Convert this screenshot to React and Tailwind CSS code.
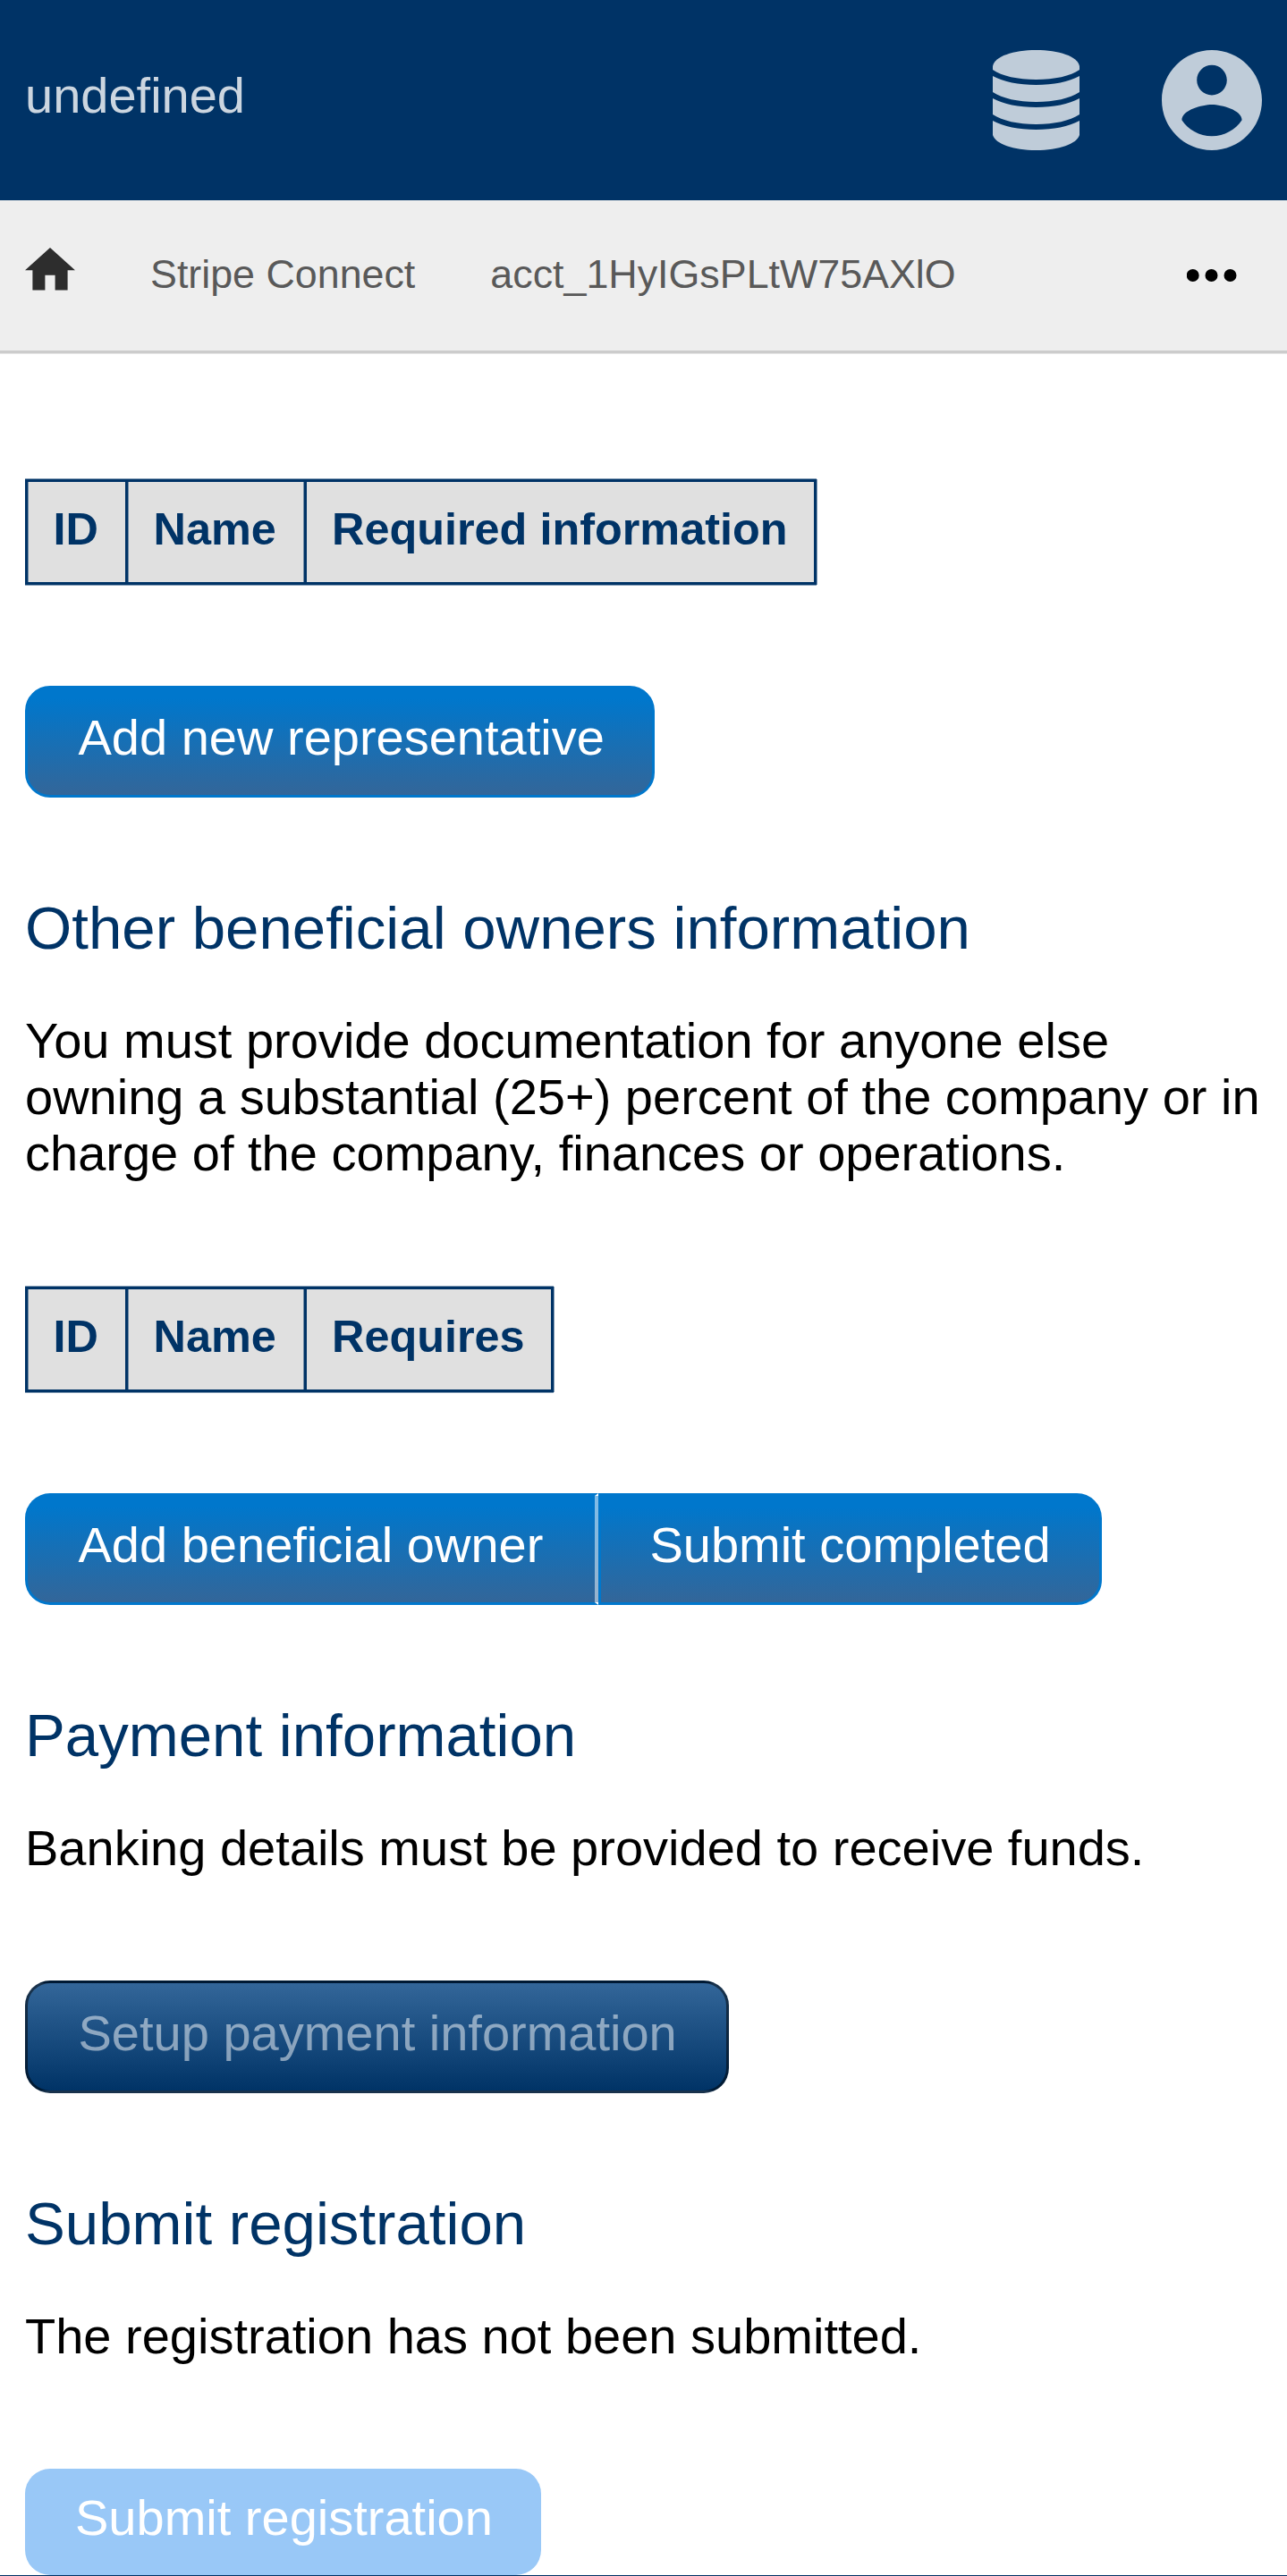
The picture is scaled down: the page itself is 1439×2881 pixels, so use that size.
const EDGE =
  "shadow-[0_-1px_0_0_#7f99b2,0_1px_0_0_#7f99b2,1px_0_0_0_#7f99b2,inset_1px_0_0_0_#708aa3]";

function HeaderTable({ last, lastWidth }) {
  return (
    <div
      className={`flex h-[118px] w-fit border-[3px] border-[#003366] bg-[#e0e0e0] text-[50.4px] leading-[57px] font-bold whitespace-nowrap text-[#003366] ${EDGE}`}
    >
      <div className="w-[109px] pt-[24px] pl-[28.5px]">ID</div>
      <div className="w-[200px] border-l-[3px] border-[#003366] pt-[24px] pl-[28.5px] shadow-[inset_1px_0_0_0_#708aa3]">
        Name
      </div>
      <div
        className={`border-l-[3px] border-[#003366] pt-[24px] pl-[28px] shadow-[-1px_0_0_0_#708aa3] ${lastWidth}`}
      >
        {last}
      </div>
    </div>
  );
}

function Button({ children, className }) {
  return (
    <button
      className={`flex items-start border-[3px] leading-[63px] whitespace-nowrap ${className}`}
    >
      {children}
    </button>
  );
}

function Heading({ children }) {
  return (
    <h2 className="h-[77px] text-[67.2px] leading-[75px] whitespace-nowrap text-[#003366]">
      {children}
    </h2>
  );
}

function DatabaseIcon() {
  return (
    <svg className="h-[112px] w-[97px]" viewBox="0 0 97 112" fill="#bfccd9">
      <path d="M0 18C2 7 23 0 48.500 0S95 7 97 18V22C87 29 69 33 48.500 33S10 29 0 22Z" />
      <path d="M0 29C12 35.500 29 39 48.500 39S85 35.500 97 29V47C86 54 69 58 48.500 58S11 54 0 47Z" />
      <path d="M0 54C12 60.500 29 64 48.500 64S85 60.500 97 54V72C86 79 69 83 48.500 83S11 79 0 72Z" />
      <path d="M0 79C12 85.500 29 89 48.500 89S85 85.500 97 79V95C94 105 74 112 48.500 112S3 105 0 95Z" />
    </svg>
  );
}

function AccountIcon() {
  return (
    <svg className="h-[112px] w-[112px]" viewBox="2 2 20 20" fill="#bfccd9">
      <path d="M12 2C6.480 2 2 6.480 2 12s4.480 10 10 10 10-4.480 10-10S17.520 2 12 2zm0 3c1.660 0 3 1.340 3 3s-1.340 3-3 3-3-1.340-3-3 1.340-3 3-3zm0 14.200c-2.500 0-4.710-1.280-6-3.220.03-1.990 4-3.080 6-3.080 1.990 0 5.970 1.090 6 3.080-1.290 1.940-3.500 3.220-6 3.220z" />
    </svg>
  );
}

export default function App() {
  return (
    <div className="h-[2881px] w-[1439px] overflow-hidden bg-white font-['Liberation_Sans',Arial,sans-serif] text-[56px] leading-[63px] text-black">
      <header className="flex h-[224px] items-start bg-[#003366] pt-[56px] pr-[28px] pl-[28px]">
        <div className="mt-[19px] text-[#ccd6e0]">undefined</div>
        <div className="ml-auto flex gap-[92px]">
          <DatabaseIcon />
          <AccountIcon />
        </div>
      </header>

      <nav className="flex h-[171px] items-start border-b-[3px] border-[#cccccc] bg-[#eeeeee] pl-[28px] text-[44.8px] leading-[52px] text-[#595959] shadow-[0_1px_0_0_#e5e5e5]">
        <svg className="mt-[53px] h-[48px] w-[56px]" viewBox="2 3 20 17.143" fill="#2d2d2d">
          <path d="M10 20v-6h4v6h5v-8h3L12 3 2 12h3v8z" />
        </svg>
        <span className="mt-[56px] ml-[84px]">Stripe Connect</span>
        <span className="mt-[56px] ml-[84px]">acct_1HyIGsPLtW75AXlO</span>
        <svg className="mt-[77px] mr-[56px] ml-auto h-[14px] w-[56px]" viewBox="0 0 56 14" fill="#000000">
          <circle cx="6.700" cy="7" r="7" />
          <circle cx="27.500" cy="7" r="7" />
          <circle cx="48.500" cy="7" r="7" />
        </svg>
      </nav>

      <main className="pl-[28px]">
        <div className="h-[232px] pt-[141px]">
          <HeaderTable last="Required information" lastWidth="w-[570px]" />
        </div>
        <div className="h-[373px] pt-[140px]">
          <Button className="h-[125px] w-[704px] rounded-[28px] border-[#0077cc] bg-linear-to-b/srgb from-[#0077cc] from-10% to-[#336699] pt-[23px] pl-[56.5px] text-white">
            Add new representative
          </Button>
        </div>

        <Heading>Other beneficial owners information</Heading>
        <p className="mt-[55px] w-[1383px]">
          You must provide documentation for anyone else owning a substantial (25+) percent of the
          company or in charge of the company, finances or operations.
        </p>
        <div className="mt-[118px]">
          <HeaderTable last="Requires" lastWidth="w-[276px]" />
        </div>
        <div className="mt-[113px] flex">
          <Button className="h-[125px] w-[641px] rounded-l-[28px] border-r-[4px] border-[#0077cc] border-r-white/50 bg-linear-to-b/srgb from-[#0077cc] from-10% to-[#336699] pt-[23px] pl-[56.5px] text-white">
            Add beneficial owner
          </Button>
          <Button className="h-[125px] w-[563px] justify-center rounded-r-[28px] border-[#0077cc] bg-linear-to-b/srgb from-[#0077cc] from-10% to-[#336699] pt-[23px] text-white">
            Submit completed
          </Button>
        </div>

        <div className="mt-[108px]">
          <Heading>Payment information</Heading>
        </div>
        <p className="mt-[55px]">Banking details must be provided to receive funds.</p>
        <Button className="mt-[117px] h-[126px] w-[787px] rounded-[28px] border-black/50 bg-linear-to-b/srgb from-[#336699] to-[#003366] pt-[24px] pl-[56.5px] text-white/50">
          Setup payment information
        </Button>

        <div className="mt-[108px]">
          <Heading>Submit registration</Heading>
        </div>
        <p className="mt-[55px]">The registration has not been submitted.</p>
        <button className="mt-[117px] flex h-[119px] w-[577px] items-start rounded-[28px] bg-[#99c8f7] pt-[23px] pl-[56px] leading-[63px] text-white">
          Submit registration
        </button>
      </main>
      <footer className="h-px bg-[#003366]" />
    </div>
  );
}
